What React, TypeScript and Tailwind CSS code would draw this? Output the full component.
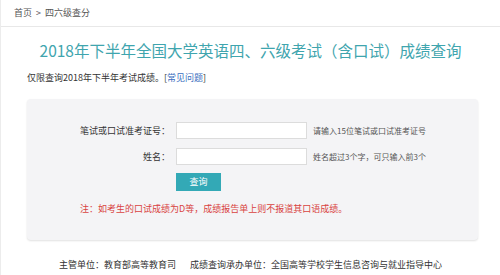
export default function App() {
  const font = { fontFamily: '"Noto Sans CJK SC", "Noto Sans", sans-serif' };
  return (
    <div
      className="w-[500px] h-[275px] bg-white border-l border-[#ececec] overflow-hidden text-[#333]"
      style={font}
    >
      {/* breadcrumb */}
      <div className="h-[27px] border-b border-[#e8e8e8] flex items-center pl-[13px] text-[9px] text-[#555]">
        <span>首页</span>
        <span className="mx-[4px]">&gt;</span>
        <span>四六级查分</span>
      </div>

      <h1 className="mt-[12px] text-center text-[15.5px] leading-[22px] text-[#3fa5ae]">
        2018年下半年全国大学英语四、六级考试（含口试）成绩查询
      </h1>

      <p className="mt-[11px] pl-[26px] text-[9px] leading-[12px]">
        仅限查询2018年下半年考试成绩。[
        <a className="text-[#3b6fc0]">常见问题</a>]
      </p>

      {/* query panel */}
      <div className="mt-[15px] ml-[26px] w-[451px] h-[141px] bg-[#f4f4f6] rounded-[4px] shadow-[0_1px_2px_rgba(0,0,0,0.12)] pt-[23px]">
        <div className="flex items-center h-[17px]">
          <label className="w-[149px] text-right text-[9px] pr-[6px]">笔试或口试准考证号：</label>
          <input className="w-[131px] h-[17px] bg-white border border-[#dcdcdc] outline-none" />
          <span className="ml-[6px] text-[8px] text-[#555]">请输入15位笔试或口试准考证号</span>
        </div>
        <div className="flex items-center h-[17px] mt-[9px]">
          <label className="w-[149px] text-right text-[9px] pr-[6px]">姓名：</label>
          <input className="w-[131px] h-[17px] bg-white border border-[#dcdcdc] outline-none" />
          <span className="ml-[6px] text-[8px] text-[#555]">姓名超过3个字，可只输入前3个</span>
        </div>
        <div className="flex mt-[8px]">
          <div className="w-[149px]" />
          <button className="w-[45px] h-[18px] bg-[#33a9b6] text-white text-[9px] leading-[18px]">查询</button>
        </div>
        <p className="mt-[12px] pl-[53px] text-[9px] leading-[12px] text-[#d9433f]">
          注：如考生的口试成绩为D等，成绩报告单上则不报道其口语成绩。
        </p>
      </div>

      <div className="mt-[19px] text-center text-[9px] leading-[12px]">
        主管单位：教育部高等教育司<span className="inline-block w-[14px]" />成绩查询承办单位：全国高等学校学生信息咨询与就业指导中心
      </div>
    </div>
  );
}
